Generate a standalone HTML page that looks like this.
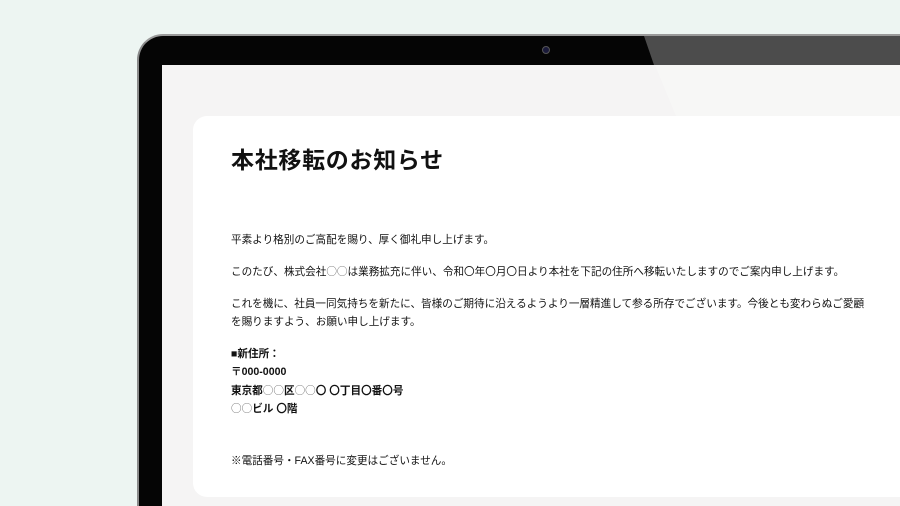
<!DOCTYPE html>
<html><head><meta charset="utf-8"><style>
*{margin:0;padding:0;box-sizing:border-box}
html,body{width:900px;height:506px;overflow:hidden}
body{background:#edf5f2;position:relative;font-family:"Liberation Sans","Noto Sans CJK JP",sans-serif;color:#111}
.bezel{position:absolute;left:137px;top:34px;width:800px;height:472px;background:#050505;border-radius:26px 0 0 0;border-top:2px solid #9a9a9a;border-left:2px solid #8a8a8a}
.glare{position:absolute;left:0;top:0;width:900px;height:506px;background:#4c4c4c;clip-path:polygon(644px 36px,900px 36px,900px 65px,654px 65px)}
.screen{position:absolute;left:162px;top:65px;width:738px;height:441px;background:#f5f4f4}
.sg{position:absolute;left:0;top:0;width:900px;height:506px;background:#f7f7f6;clip-path:polygon(655px 65px,900px 65px,900px 116px,676px 116px)}
.cam{position:absolute;left:542px;top:46px;width:8px;height:8px;border-radius:50%;background:#1a1a3a;border:1px solid #555}
.card{position:absolute;left:193px;top:116px;width:740px;height:381px;background:#fff;border-radius:14px}
.t{position:absolute;left:231px;white-space:nowrap;font-size:10.6px;line-height:18px}
h1{position:absolute;left:231px;top:141px;font-size:23px;font-weight:bold;letter-spacing:0.7px}
b{font-weight:bold}
.l{font-weight:normal;color:#666;font-family:"Noto Sans CJK JP",sans-serif}
</style></head><body>
<div class="bezel"></div>
<div class="glare"></div>
<div class="cam"></div>
<div class="screen"></div>
<div class="sg"></div>
<div class="card"></div>
<h1>本社移転のお知らせ</h1>
<div class="t" style="top:231px">平素より格別のご高配を賜り、厚く御礼申し上げます。</div>
<div class="t" style="top:263px">このたび、株式会社<span class="l">○○</span>は業務拡充に伴い、令和〇年〇月〇日より本社を下記の住所へ移転いたしますのでご案内申し上げます。</div>
<div class="t" style="top:295px">これを機に、社員一同気持ちを新たに、皆様のご期待に沿えるようより一層精進して参る所存でございます。今後とも変わらぬご愛顧</div>
<div class="t" style="top:313px">を賜りますよう、お願い申し上げます。</div>
<div class="t" style="top:345px"><b>■新住所：</b></div>
<div class="t" style="top:363px"><b>〒000-0000</b></div>
<div class="t" style="top:382px"><b>東京都<span class="l">○○</span>区<span class="l">○○</span>〇 〇丁目〇番〇号</b></div>
<div class="t" style="top:400px"><b><span class="l">○○</span>ビル 〇階</b></div>
<div class="t" style="top:452px">※電話番号・FAX番号に変更はございません。</div>
</body></html>
